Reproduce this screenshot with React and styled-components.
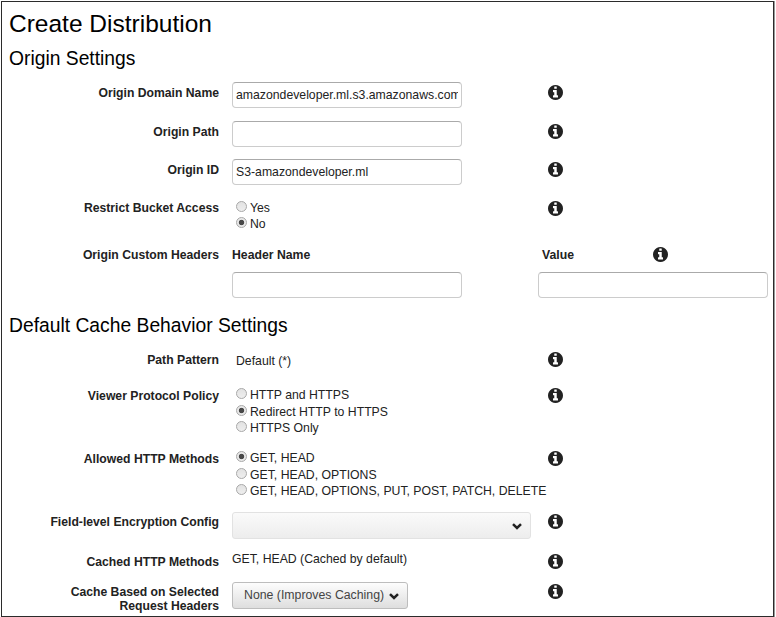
import React from "react";
import styled, { createGlobalStyle } from "styled-components";

const GlobalStyle = createGlobalStyle`
  * { box-sizing: border-box; }
  body {
    margin: 0;
    background: #fff;
    color: #222;
    font: 12.25px/17px "Liberation Sans", Arial, sans-serif;
    overflow: hidden;
  }
`;

const Page = styled.main`
  width: 773px;
  height: 616px;
  margin: 1px 0 0 1px;
  border: 1px solid #2b2b2b;
  box-shadow: 1px 0 0 #999;
  background: #fff;
`;

const Title = styled.h1`
  margin: 0;
  height: 42px;
  padding: 7px 0 0 7px;
  font-size: 24.5px;
  line-height: 29px;
  font-weight: 400;
  color: #000;
`;

const SectionTitle = styled.h2`
  margin: 0;
  height: ${(p) => p.$height}px;
  padding: ${(p) => p.$top}px 0 0 7px;
  font-size: 19.3px;
  line-height: 25px;
  font-weight: 400;
  color: #000;
`;

const Row = styled.div`
  display: grid;
  grid-template-columns: 217px 303px 15px;
  column-gap: 13px;
  height: ${(p) => p.$height}px;
  align-items: start;
`;

const HeadersRow = styled(Row)`
  grid-template-columns: 217px 230px 230px;
  column-gap: 0;
  & > :nth-child(2) { margin-left: 13px; }
  & > :nth-child(3) { margin-left: 89px; }
`;

const Label = styled.div`
  padding-top: ${(p) => p.$top}px;
  font-size: 12.2px;
  font-weight: 700;
  line-height: 14px;
  text-align: right;
  white-space: pre-line;
`;

const InfoSvg = styled.svg`
  display: block;
  flex: none;
  width: 15px;
  height: 15px;
  margin-top: ${(p) => p.$top || 0}px;
  fill: #222;
`;

const TextField = styled.input`
  display: block;
  width: 230px;
  height: 26px;
  padding: 0 3px;
  border: 1px solid #ccc;
  border-top-color: #aaa;
  border-radius: 4px;
  background: #fff;
  color: #222;
  font: inherit;
  outline: none;
`;

const RadioGroup = styled.div`
  display: flex;
  flex-direction: column;
  padding: ${(p) => p.$top}px 0 0 4px;
`;

const RadioOption = styled.label`
  display: flex;
  align-items: center;
  gap: 3px;
  height: 16.6px;
  white-space: nowrap;
`;

const RadioInput = styled.input`
  appearance: none;
  flex: none;
  width: 11px;
  height: 11px;
  margin: -4px 0 0;
  border: 1px solid #a8a8a8;
  border-radius: 50%;
  background: linear-gradient(#e2e2e2, #eee);
  &:checked {
    background: radial-gradient(circle, #484848 0 2.3px, #e8e8e8 3.1px);
  }
`;

const StaticText = styled.div`
  padding: ${(p) => p.$top}px 0 0 ${(p) => p.$left || 0}px;
`;

const ColumnHead = styled.div`
  display: flex;
  justify-content: space-between;
  height: 25px;
  padding: 0 100px 0 ${(p) => p.$left || 0}px;
  font-weight: 700;
`;

const HeaderColumn = styled.div`
  width: 230px;
  padding-top: 7px;
`;

const Dropdown = styled.button`
  display: flex;
  align-items: center;
  justify-content: space-between;
  width: ${(p) => p.$width}px;
  height: 27px;
  margin-top: ${(p) => p.$top}px;
  padding: 0 8px 0 11px;
  border: 1px solid ${(p) => (p.$muted ? "#e2e2e2" : "#bdbdbd")};
  border-radius: 3px;
  background: ${(p) =>
    p.$muted
      ? "linear-gradient(#fafafa, #ededed)"
      : "linear-gradient(#fdfdfd, #dedede)"};
  color: #444;
  font: inherit;
  font-size: 12.3px;
  white-space: nowrap;
`;

const Chevron = styled.svg`
  flex: none;
  width: 10px;
  height: 7px;
  margin-top: 2px;
  fill: none;
  stroke: #222;
  stroke-width: 2.5;
`;

function Arrow() {
  return (
    <Chevron viewBox="0 0 10 7">
      <path d="M1 1.2 5 5 9 1.2" />
    </Chevron>
  );
}

function InfoIcon({ top }) {
  return (
    <InfoSvg $top={top} viewBox="128 128 1536 1536">
      <path d="M1152 1376v-160q0-14-9-23t-23-9h-96v-512q0-14-9-23t-23-9h-320q-14 0-23 9t-9 23v160q0 14 9 23t23 9h96v320h-96q-14 0-23 9t-9 23v160q0 14 9 23t23 9h448q14 0 23-9t9-23zM1024 480v-160q0-14-9-23t-23-9h-192q-14 0-23 9t-9 23v160q0 14 9 23t23 9h192q14 0 23-9t9-23zM1664 896q0 209-103 385.5t-279.5 279.5-385.5 103-385.5-103-279.5-279.5-103-385.5 103-385.5 279.5-279.5 385.5-103 385.5 103 279.5 279.5 103 385.5z" />
    </InfoSvg>
  );
}

function Radios({ name, options, selected, top }) {
  return (
    <RadioGroup $top={top}>
      {options.map((text, i) => (
        <RadioOption key={text}>
          <RadioInput type="radio" name={name} defaultChecked={i === selected} />
          {text}
        </RadioOption>
      ))}
    </RadioGroup>
  );
}

function FormRow({ label, height, labelTop, iconTop, children }) {
  return (
    <Row $height={height}>
      <Label $top={labelTop}>{label}</Label>
      {children}
      <InfoIcon top={iconTop} />
    </Row>
  );
}

export default function App() {
  return (
    <>
      <GlobalStyle />
      <Page>
        <Title>Create Distribution</Title>
        <SectionTitle $height={38} $top={2}>Origin Settings</SectionTitle>
        <FormRow label="Origin Domain Name" height={39} labelTop={4} iconTop={3}>
          <TextField defaultValue="amazondeveloper.ml.s3.amazonaws.com" />
        </FormRow>
        <FormRow label="Origin Path" height={38} labelTop={4} iconTop={3}>
          <TextField />
        </FormRow>
        <FormRow label="Origin ID" height={39} labelTop={4} iconTop={3}>
          <TextField defaultValue="S3-amazondeveloper.ml" />
        </FormRow>
        <FormRow label="Restrict Bucket Access" height={42} labelTop={3} iconTop={3}>
          <Radios name="restrict" options={["Yes", "No"]} selected={1} top={2.1} />
        </FormRow>
        <HeadersRow $height={72}>
          <Label $top={8}>Origin Custom Headers</Label>
          <HeaderColumn>
            <ColumnHead>Header Name</ColumnHead>
            <TextField />
          </HeaderColumn>
          <HeaderColumn>
            <ColumnHead $left={4}>
              Value
              <InfoIcon />
            </ColumnHead>
            <TextField />
          </HeaderColumn>
        </HeadersRow>
        <SectionTitle $height={38} $top={1}>Default Cache Behavior Settings</SectionTitle>
        <FormRow label="Path Pattern" height={36} labelTop={3} iconTop={2}>
          <StaticText $top={3} $left={4}>Default (*)</StaticText>
        </FormRow>
        <FormRow label="Viewer Protocol Policy" height={63} labelTop={3} iconTop={2}>
          <Radios
            name="protocol"
            options={["HTTP and HTTPS", "Redirect HTTP to HTTPS", "HTTPS Only"]}
            selected={1}
            top={1.5}
          />
        </FormRow>
        <FormRow label="Allowed HTTP Methods" height={63} labelTop={3} iconTop={2}>
          <Radios
            name="methods"
            options={[
              "GET, HEAD",
              "GET, HEAD, OPTIONS",
              "GET, HEAD, OPTIONS, PUT, POST, PATCH, DELETE",
            ]}
            selected={0}
            top={1.5}
          />
        </FormRow>
        <FormRow label="Field-level Encryption Config" height={38} labelTop={3} iconTop={2}>
          <Dropdown $width={299} $top={0} $muted>
            <span />
            <Arrow />
          </Dropdown>
        </FormRow>
        <FormRow label="Cached HTTP Methods" height={31} labelTop={5} iconTop={4}>
          <StaticText $top={1}>GET, HEAD (Cached by default)</StaticText>
        </FormRow>
        <FormRow
          label={"Cache Based on Selected\nRequest Headers"}
          height={34}
          labelTop={4}
          iconTop={3}
        >
          <Dropdown $width={176} $top={1}>
            None (Improves Caching)
            <Arrow />
          </Dropdown>
        </FormRow>
      </Page>
    </>
  );
}
